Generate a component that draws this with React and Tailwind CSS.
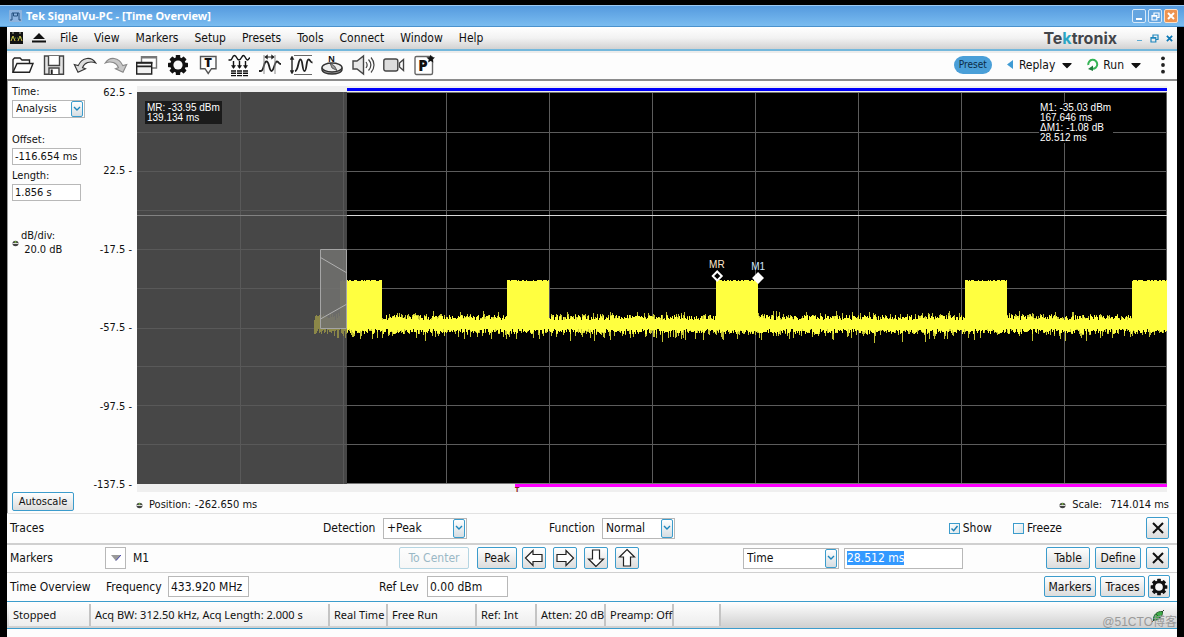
import { useEffect, useRef } from 'react';
import { FaCaretDown } from 'react-icons/fa';

const menus = ['File', 'View', 'Markers', 'Setup', 'Presets', 'Tools', 'Connect', 'Window', 'Help'];
const levels = ['62.5', '22.5', '-17.5', '-57.5', '-97.5', '-137.5'];

// Plot area, in units of the svg viewBox
const PLOT_W = 1030;
const PLOT_H = 392;
const LIVE_X = 210;
const gridX = [103, 206, 309, 412, 515, 618, 721, 824, 927, 1029];
const gridY = [40, 79, 118, 157, 196, 236, 274, 313, 352];
const bursts = [[203, 245], [370, 412], [579, 621], [828, 870], [995, 1030]];

function makeTrace() {
  let seed = 7;
  const rand = () => {
    seed = (seed * 16807) % 2147483647;
    return seed / 2147483647;
  };
  let dim = '';
  let body = '';
  let tips = '';
  for (let x = 177; x < PLOT_W; x++) {
    const inBurst = bursts.some(([a, b]) => x >= a && x < b);
    const top = inBurst ? 189 - Math.round(rand() * 1.2) : 228 - Math.round(rand() * 5);
    const bottom = 237 + Math.round(rand() * 5);
    const up = inBurst ? 0 : Math.round(Math.pow(rand(), 5) * 5);
    const down = Math.round(Math.pow(rand(), 6) * 9);
    const px = x + 0.5;
    if (x < LIVE_X) {
      dim += `M${px} ${top - up}V${bottom + down}`;
    } else {
      body += `M${px} ${top}V${bottom}`;
      tips += `M${px} ${top - up}V${bottom + down}`;
    }
  }
  return { dim, body, tips };
}

const trace = makeTrace();

function Gear({ className }) {
  return (
    <svg viewBox="0 0 24 24" className={className}>
      <g fill="#111">
        {[0, 45, 90, 135].map((a) => (
          <rect key={a} x="9.8" y="2" width="4.4" height="20" rx="0.6" transform={`rotate(${a} 12 12)`} />
        ))}
        <circle cx="12" cy="12" r="7.8" />
      </g>
      <circle cx="12" cy="12" r="4.6" fill="#fafafa" />
    </svg>
  );
}

const svgProps = { viewBox: '0 0 24 24', className: 'h-6 w-6', fill: 'none', stroke: '#222', strokeWidth: 1.4 };

const tools = [
  ['Open', (
    <svg {...svgProps}>
      <path d="M2 19V6.5L3.5 5H9l2 2h7.500v3.500" />
      <path d="M2 19.300L6 10.500h16L18.500 19.300z" fill="#fff" />
    </svg>
  )],
  ['Save', (
    <svg {...svgProps} stroke="#444">
      <path d="M2.500 3h19v18.300h-19z" fill="#e4e4e4" />
      <path d="M6.500 3v9.500h11V3" fill="#fff" />
      <path d="M7 21v-6h10v6" fill="#fff" />
      <path d="M9.700 16.500V21" stroke="#222" strokeWidth="2" />
    </svg>
  )],
  ['Undo', (
    <svg {...svgProps} stroke="#333" strokeWidth="1.1">
      <path d="M1.300 11.500L5 19.200l7.500-3.400-3-1.200C11.500 9.600 17 7.800 22.800 10 18.500 3.400 9.200 3.600 5.200 12.600z" fill="#ddd" />
    </svg>
  )],
  ['Redo', (
    <svg {...svgProps} stroke="#888" strokeWidth="1.1">
      <path d="M22.700 11.500L19 19.200l-7.500-3.400 3-1.200C12.500 9.600 7 7.800 1.200 10 5.500 3.400 14.800 3.600 18.800 12.600z" fill="#c8c8c8" />
    </svg>
  )],
  ['Displays', (
    <svg {...svgProps}>
      <path d="M6.500 3.700h15V15h-15z" fill="#fff" stroke="#777" />
      <path d="M6 4.500h16" stroke="#777" strokeWidth="2" />
      <path d="M1.700 9.500h15V21h-15z" fill="#f2f2f2" />
      <path d="M1.700 13.300h15M1 9.800h16.400" strokeWidth="1.8" />
    </svg>
  )],
  ['Settings', <Gear className="h-6 w-6" />],
  ['Trigger', (
    <svg {...svgProps} stroke="#555">
      <path d="M3.500 3.500H19v12.200h-4.500L11.200 20.500 8 15.700H3.500z" />
      <text x="11.200" y="14" textAnchor="middle" fontFamily="Noto Sans" fontWeight="900" fontSize="13" fill="#111" stroke="none">T</text>
    </svg>
  )],
  ['Acquire', (
    <svg {...svgProps} stroke="#111">
      <path d="M.5 7h2C4.500 7 4 2.500 6.500 2.500S8.500 7 11 7s2.500-4.500 4.500-4.500S17.500 7 19.500 7c1.500 0 1-2 2.500-2" />
      <path d="M5.500 8v7M11.500 8v7M17.500 8v7" />
      <path d="M3.500 12.500l2 3 2-3zM9.500 12.500l2 3 2-3zM15.500 12.500l2 3 2-3z" fill="#111" strokeWidth="0.5" />
      <path d="M3 18h5M9 18h5M15 18h5M3 20.300h5M9 20.300h5M15 20.300h5M3 22.600h5M9 22.600h5M15 22.600h5" />
    </svg>
  )],
  ['Analysis time', (
    <svg {...svgProps}>
      <path d="M0 18h2C5 18 4.500 8.500 7.500 8.500S10 18 12.500 18s3-9.500 5.500-9.500c2 0 1.500 2.500 4 2.500" strokeWidth="1.8" />
      <path d="M5 2v19M16 2v19" stroke="#888" strokeWidth="1" />
      <path d="M6 4h9" strokeWidth="1" />
      <path d="M8.500 1.800L5.700 4l2.800 2.200zM12.500 1.800L15.300 4l-2.800 2.200z" fill="#222" strokeWidth="0.4" />
    </svg>
  )],
  ['Amplitude', (
    <svg {...svgProps}>
      <path d="M4 2.500h18M4 21.500h18" strokeWidth="1" stroke="#666" />
      <path d="M5 18c3.500 0 3-11.500 5.500-11.500S12 18 14.500 18 16 6.500 18.500 6.500c2 0 1.500 3 4 3" strokeWidth="1.8" />
      <path d="M2 4v16" />
      <path d="M0 6.500L2 3l2 3.500zM0 17.500L2 21l2-3.500z" fill="#222" strokeWidth="0.4" />
    </svg>
  )],
  ['Direction', (
    <svg {...svgProps} stroke="#333">
      <path d="M1 14.500v2c0 6 20 6 20 0v-2" fill="#aaa" />
      <ellipse cx="11" cy="14.500" rx="10" ry="4.500" fill="#eee" />
      <path d="M9 10l2 5 5 2.500-2.500-4.500z" fill="#999" strokeWidth="0.7" />
      <text x="10.500" y="8.500" textAnchor="middle" fontFamily="Liberation Sans" fontWeight="700" fontSize="9" fill="#111" stroke="none">N</text>
    </svg>
  )],
  ['Audio', (
    <svg {...svgProps} stroke="#444">
      <path d="M1 8h4l6.500-5v18L5 16H1z" fill="#e8e8e8" />
      <path d="M14 9c1.500 2 1.500 4 0 6M16.500 6.500c3 3.500 3 7.500 0 11M19 4.500c4 4.500 4 10.500 0 15" strokeWidth="1.2" />
    </svg>
  )],
  ['Record', (
    <svg {...svgProps} stroke="#444">
      <rect x="0.8" y="6" width="14" height="12" rx="2" fill="#ddd" />
      <path d="M16.500 10l4-3.500v11l-4-3.500z" fill="#fff" />
    </svg>
  )],
  ['Preset list', (
    <svg {...svgProps} stroke="#666">
      <rect x="1" y="3.500" width="17.500" height="18" rx="1.500" fill="#fff" />
      <text x="9" y="18" textAnchor="middle" fontFamily="Noto Sans" fontWeight="900" fontSize="15" fill="#111" stroke="none">P</text>
      <path d="M16.700 3.200l.8 1.600 1.800.2-1.400 1.200.4 1.800-1.600-.9-1.600.9.400-1.800L14.100 5l1.800-.2z" fill="#111" stroke="#111" strokeWidth="1.400" />
    </svg>
  )],
];

function Select({ label, value, className }) {
  return (
    <span className={`relative block ${className}`}>
      <select aria-label={label} defaultValue={value} className="block h-full w-full appearance-none border border-[#b8b8b8] bg-white pl-[3px] outline-none">
        <option>{value}</option>
      </select>
      <span className="pointer-events-none absolute inset-y-px right-0.5 flex w-3 items-center justify-center rounded-xs border border-[#3c9ccc] bg-linear-to-b from-white to-[#d5dde2]">
        <svg viewBox="0 0 8 6" className="h-1.5 w-2" fill="none" stroke="#1d86bd" strokeWidth="1.4">
          <path d="M1 1l3 3 3-3" />
        </svg>
      </span>
    </span>
  );
}

function Button({ children, className = '', ...rest }) {
  return (
    <button
      type="button"
      className={`flex items-center justify-center rounded-xs border border-[#3c9ccc] bg-linear-to-b from-white to-[#dcdcdc] whitespace-nowrap disabled:border-[#b5d5e2] disabled:from-[#fdfdfd] disabled:to-[#f6f6f6] disabled:text-[#9ab8c6] ${className}`}
      {...rest}
    >
      {children}
    </button>
  );
}

function ArrowButton({ label, rotate }) {
  return (
    <Button aria-label={label} className="h-[22px] w-6">
      <svg viewBox="0 0 20 20" className={`h-5 w-5 ${rotate}`} fill="#fff" stroke="#222" strokeWidth="1.2">
        <path d="M1.500 10L9 2.500v4h9v7H9v4z" />
      </svg>
    </Button>
  );
}

function CloseButton({ label }) {
  return (
    <Button aria-label={label} className="h-[22px] w-[23px]">
      <svg viewBox="0 0 12 12" className="h-3 w-3" stroke="#111" strokeWidth="2">
        <path d="M1 1l10 10M11 1L1 11" />
      </svg>
    </Button>
  );
}

function CheckBox({ label, checked }) {
  return (
    <label className="flex items-center gap-[3px]">
      <span className="relative flex h-[11px] w-[11px]">
        <input type="checkbox" defaultChecked={checked} className="peer h-[11px] w-[11px] appearance-none border border-[#3c9ccc] bg-linear-to-br from-white to-[#dde6ea]" />
        <svg viewBox="0 0 11 11" className="pointer-events-none absolute inset-0 hidden peer-checked:block" fill="none" stroke="#1d7fb5" strokeWidth="1.4">
          <path d="M2.500 5.500l2.200 2.300L8.500 3" />
        </svg>
      </span>
      {label}
    </label>
  );
}

function Knob() {
  return (
    <svg viewBox="0 0 7 7" className="h-[7px] w-[7px] shrink-0">
      <ellipse cx="3.500" cy="3.500" rx="3" ry="2.800" fill="#444" />
      <path d="M.5 3.500h6" stroke="#ddd" />
      <circle cx="3.500" cy="2" r="1" fill="#7ab648" />
    </svg>
  );
}

function Restore({ color }) {
  return (
    <svg viewBox="0 0 9 9" className="h-[9px] w-[9px]" fill="none" stroke={color} strokeWidth="1.2">
      <path d="M3 3V1h5v4.500H6" />
      <path d="M1 3.500h4.800V8H1zM1 4.200h5" />
    </svg>
  );
}

function TitleBar() {
  return (
    <header className="flex h-[22px] items-center border-t border-b border-t-[#9ccaf2] border-b-[#4b92cd] bg-linear-to-b from-[#559ade] to-[#7abcf0] pr-1.5 pl-[9px]">
      <svg viewBox="0 0 13 12" className="h-3 w-[13px]" stroke="#24507f">
        <path d="M.5.5h12v11H.5z" fill="#8db4e0" stroke="#8fb4dc" />
        <path d="M1 10h2V3h7v7h2M4.500 3v3h4V3" fill="none" />
      </svg>
      <h1 className="ml-1 font-['Noto_Sans',sans-serif] text-[11px] font-bold text-white">Tek SignalVu-PC - [Time Overview]</h1>
      <div className="ml-auto flex gap-0.5">
        <button type="button" aria-label="Minimize" className="flex h-3.5 w-3.5 items-end justify-center rounded-xs border border-[#d5e8f8] bg-[#65a5e0] pb-0.5">
          <span className="h-0.5 w-1.5 bg-white" />
        </button>
        <button type="button" aria-label="Restore" className="flex h-3.5 w-3.5 items-center justify-center rounded-xs border border-[#d5e8f8] bg-[#65a5e0]">
          <Restore color="#fff" />
        </button>
        <button type="button" aria-label="Close" className="flex h-3.5 w-3.5 items-center justify-center rounded-xs border border-[#fbe0c8] bg-[#ee9350]">
          <svg viewBox="0 0 8 8" className="h-2 w-2" stroke="#fff" strokeWidth="2"><path d="M1 1l6 6M7 1L1 7" /></svg>
        </button>
      </div>
    </header>
  );
}

function MenuBar() {
  return (
    <nav className="flex h-6 items-center border-b-2 border-[#74b8dc] bg-linear-to-b from-white via-[#f2f2f2] to-[#d2d2d2] pr-1 pl-[3px]">
      <svg viewBox="0 0 13 12" className="h-3 w-[13px]">
        <path d="M0 0h13v12H0z" fill="#111" />
        <path d="M1 9l2-5 2 5M8 9l2-5 2 5" fill="none" stroke="#d8c84a" />
        <path d="M1 6h11" stroke="#5c8a3a" strokeDasharray="1 1" />
        <path d="M2 1h2M9 1h2" stroke="#b8b8a0" />
      </svg>
      <svg viewBox="0 0 14 10" className="ml-[9px] h-2.5 w-3.5"><path d="M7 0l6 6H1zM0 7.500h14v2H0z" fill="#111" /></svg>
      <div className="ml-3.5 flex gap-4">
        {menus.map((m) => (
          <a key={m} href="#" className="text-xs">{m}</a>
        ))}
      </div>
      <div className="ml-auto flex items-center">
        <span className="mr-5 font-['Inter',sans-serif] text-base font-bold text-[#42454a]">
          Te<span className="text-[#2aa5c4]">k</span>tronix
        </span>
        <button type="button" aria-label="Minimize window" className="mt-1 h-px w-[5px] bg-[#5eabd2]" />
        <button type="button" aria-label="Restore window" className="ml-2"><Restore color="#1d86bd" /></button>
        <button type="button" aria-label="Close window" className="ml-[7px]">
          <svg viewBox="0 0 8 8" className="h-[7px] w-[7px]" stroke="#0c78b5" strokeWidth="2"><path d="M1 1l6 6M7 1L1 7" /></svg>
        </button>
      </div>
    </nav>
  );
}

function ToolBar() {
  return (
    <div className="flex h-[30px] items-center border-t-2 border-b-2 border-t-[#ececec] border-b-[#8c8c8c] bg-[#fdfdfd] pr-3 pb-[3px] pl-1">
      <div className="flex gap-[7px]">
        {tools.map(([name, icon]) => (
          <button key={name} type="button" aria-label={name}>{icon}</button>
        ))}
      </div>
      <div className="ml-auto flex items-center text-xs">
        <button type="button" className="h-[18px] w-[38px] rounded-full bg-[#4a9fd8] text-[10px] text-[#0c2c45]">Preset</button>
        <button type="button" className="ml-[15px] flex items-center">
          <svg viewBox="0 0 6 9" className="h-[9px] w-1.5"><path d="M6 0v9L0 4.500z" fill="#3f9bd4" /></svg>
          <span className="ml-1.5">Replay</span>
        </button>
        <button type="button" aria-label="Replay options" className="ml-1"><FaCaretDown className="h-4 w-4" /></button>
        <button type="button" className="ml-[11px] flex items-center">
          <svg viewBox="0 0 13 13" className="h-[13px] w-[13px]" fill="none" stroke="#35b455" strokeWidth="2">
            <path d="M2.300 7A4.500 4.500 0 1 1 6.500 10.800" />
            <path d="M7 7.500v5.500L2 11z" fill="#1e7d3c" stroke="none" />
          </svg>
          <span className="ml-1">Run</span>
        </button>
        <button type="button" aria-label="Run options" className="ml-1"><FaCaretDown className="h-4 w-4" /></button>
        <button type="button" aria-label="More" className="ml-[17px]">
          <svg viewBox="0 0 4 18" className="h-[18px] w-1" fill="#222">
            <circle cx="2" cy="2.300" r="1.900" /><circle cx="2" cy="9" r="1.900" /><circle cx="2" cy="15.700" r="1.900" />
          </svg>
        </button>
      </div>
    </div>
  );
}

function SidePanel() {
  return (
    <aside className="flex w-20 shrink-0 flex-col border-l border-[#999] pl-1 text-[11px] leading-[14px]">
      <span className="mt-1">Time:</span>
      <Select label="Time" value="Analysis" className="mt-px h-[18px] w-[73px]" />
      <label htmlFor="offset" className="mt-[15px]">Offset:</label>
      <input id="offset" defaultValue="-116.654 ms" className="mt-px h-[17px] w-[69px] border border-[#b8b8b8] bg-white pl-0.5" />
      <label htmlFor="length" className="mt-1">Length:</label>
      <input id="length" defaultValue="1.856 s" className="mt-px h-[17px] w-[69px] border border-[#b8b8b8] bg-white pl-0.5" />
      <div className="mt-7 flex items-center gap-0.5">
        <Knob />
        <span>dB/div:<br />&nbsp;20.0 dB</span>
      </div>
      <Button className="mt-auto mb-0.5 h-[19px] w-[62px]">Autoscale</Button>
    </aside>
  );
}

function Plot() {
  return (
    <div className="relative min-h-[392px] flex-1 bg-black font-['Liberation_Sans',Arial,sans-serif] text-[10px] leading-[10px] text-white">
      <svg viewBox={`0 0 ${PLOT_W} ${PLOT_H}`} preserveAspectRatio="none" className="absolute inset-0 h-full w-full" fill="none">
        <g stroke="#5c5c5c">
          {gridX.map((x) => <path key={x} d={`M${x + 0.5} 0V${PLOT_H}`} />)}
          {gridY.map((y) => <path key={y} d={`M0 ${y + 0.5}H${PLOT_W}`} />)}
        </g>
        <path d="M0 .5H1030M0 391.500H1030" stroke="#777" />
        <path d="M0 123.500H1030" stroke="#d8d8d8" />
        <path d={trace.tips} stroke="#c4c434" />
        <path d={trace.body} stroke="#ffff40" />
        <path d="M0 0h210v392H0z" fill="#474747" />
        <g stroke="#595959">
          {gridX.slice(0, 2).map((x) => <path key={x} d={`M${x + 0.5} 0V${PLOT_H}`} />)}
          {gridY.map((y) => <path key={y} d={`M0 ${y + 0.5}H${LIVE_X}`} />)}
        </g>
        <path d="M0 123.500H210" stroke="#828282" />
        <path d={trace.dim} stroke="#8b8748" />
        <path d="M183.500 157.500h26v79h-26z" fill="#727270" fillOpacity="0.85" stroke="#a5a5a5" />
        <path d="M183.500 165.500L210 181M183.500 227L210 212" stroke="#b0b0b0" />
      </svg>
      <div className="absolute top-[9px] left-2 bg-[#1b1b1b] px-0.5 pt-0.5 pb-px whitespace-nowrap">MR: -33.95 dBm<br />139.134 ms</div>
      <div className="absolute top-2.5 right-[54px] w-[74px] bg-black px-px pt-px whitespace-nowrap">M1: -35.03 dBm<br />167.646 ms<br />ΔM1: -1.08 dB<br />28.512 ms</div>
      <div className="absolute top-[42.8%] left-[56.3%] flex -translate-x-1/2 flex-col items-center text-[#ffe6cc]">
        MR
        <svg viewBox="0 0 12 12" className="h-3 w-3" fill="#000" stroke="#fff" strokeWidth="2"><path d="M6 1.500L10.500 6 6 10.500 1.500 6z" /></svg>
      </div>
      <div className="absolute top-[43.3%] left-[60.3%] flex -translate-x-1/2 flex-col items-center text-[#cfe8ff]">
        M1
        <svg viewBox="0 0 12 12" className="h-3 w-3" fill="#fff"><path d="M6 0l6 6-6 6-6-6z" /></svg>
      </div>
    </div>
  );
}

function Display() {
  return (
    <main className="flex flex-1 pr-2.5">
      <SidePanel />
      <div className="flex flex-1 flex-col text-[11px] leading-[14px]">
        <div className="mt-[5px] flex flex-1">
          <div className="flex w-[50px] shrink-0 flex-col justify-between pr-[5px] text-right">
            {levels.map((l) => <span key={l}>{l} -</span>)}
          </div>
          <div className="flex flex-1 flex-col bg-[#efefef]">
            <div className="flex h-1.5 items-end">
              <div className="mb-px ml-[20.4%] h-[3px] flex-1 bg-[#0000fa]" />
            </div>
            <Plot />
            <div className="h-2">
              <div className="relative ml-[36.7%] h-[3px] bg-[#ff00ff]">
                <span className="absolute top-[3px] left-0 text-[7px] leading-[6px] font-bold text-[#8c1a1a]">T</span>
              </div>
            </div>
          </div>
        </div>
        <div className="mt-[5px] -mr-0.5 flex h-4 items-center pl-[49px]">
          <Knob />
          <span className="ml-1.5">Position:</span>
          <span className="ml-1">-262.650 ms</span>
          <span className="ml-auto"><Knob /></span>
          <span className="ml-1.5">Scale:</span>
          <span className="ml-2">714.014 ms</span>
        </div>
      </div>
    </main>
  );
}

function Controls() {
  const markerValue = useRef(null);

  useEffect(() => {
    markerValue.current.focus();
    markerValue.current.select();
  }, []);

  return (
    <section className="text-xs">
      <div className="flex h-[30px] items-center border-t border-[#e2e2e2] pr-2 pb-px pl-[3px]">
        <span className="w-[313px]">Traces</span>
        <span className="w-[60px]">Detection</span>
        <Select label="Detection" value="+Peak" className="h-[21px] w-[84px]" />
        <span className="ml-[82px] w-[53px]">Function</span>
        <Select label="Function" value="Normal" className="h-[21px] w-[73px]" />
        <div className="ml-auto flex items-center gap-[21px]">
          <CheckBox label="Show" checked />
          <CheckBox label="Freeze" />
        </div>
        <div className="ml-[84px]"><CloseButton label="Close traces" /></div>
      </div>
      <div className="flex h-[29px] items-center border-t-2 border-[#d0d0d0] pr-2 pb-px pl-[3px]">
        <span className="w-[95px]">Markers</span>
        <button type="button" aria-label="Select marker" className="flex h-[22px] w-[21px] items-center justify-center border border-[#b8b8b8] bg-white">
          <svg viewBox="0 0 10 6" className="h-1.5 w-2.5"><path d="M0 0h10L5 6z" fill="#999" /><path d="M10 0L5 5.500" stroke="#4b4bb0" /></svg>
        </button>
        <span className="ml-[7px] w-[266px]">M1</span>
        <Button disabled className="h-[22px] w-[70px]">To Center</Button>
        <Button className="ml-2 h-[22px] w-10">Peak</Button>
        <div className="ml-[5px] flex gap-[7px]">
          <ArrowButton label="Previous left" rotate="rotate-0" />
          <ArrowButton label="Next right" rotate="rotate-180" />
          <ArrowButton label="Next down" rotate="-rotate-90" />
          <ArrowButton label="Next up" rotate="rotate-90" />
        </div>
        <div className="ml-auto"><Select label="Marker domain" value="Time" className="h-[21px] w-24" /></div>
        <input ref={markerValue} aria-label="Marker time" defaultValue="28.512 ms" className="ml-[5px] h-[21px] w-[119px] border border-[#b8b8b8] bg-white px-0.5 outline-none selection:bg-[#3399ff] selection:text-white" />
        <Button className="ml-[83px] h-[22px] w-11">Table</Button>
        <Button className="ml-[5px] h-[22px] w-[46px]">Define</Button>
        <div className="ml-[5px]"><CloseButton label="Close markers" /></div>
      </div>
      <div className="flex h-[29px] items-center border-t border-[#d0d0d0] pr-[7px] pb-px pl-[3px]">
        <span className="w-24">Time Overview</span>
        <label htmlFor="freq" className="w-[62px]">Frequency</label>
        <input id="freq" defaultValue="433.920 MHz" className="h-[21px] w-[81px] border border-[#b8b8b8] bg-white pl-0.5" />
        <label htmlFor="ref" className="ml-[130px] w-12">Ref Lev</label>
        <input id="ref" defaultValue="0.00 dBm" className="h-[21px] w-[81px] border border-[#b8b8b8] bg-white pl-0.5" />
        <Button className="ml-auto h-[21px] w-[52px]">Markers</Button>
        <Button className="ml-1 h-[21px] w-[45px]">Traces</Button>
        <Button aria-label="Display settings" className="ml-[3px] h-[23px] w-[22px]"><Gear className="h-5 w-5 shrink-0" /></Button>
      </div>
    </section>
  );
}

const statusCells = [
  ['Stopped', 'w-[82px]'],
  ['Acq BW: 312.50 kHz, Acq Length: 2.000 s', 'w-[239px]'],
  ['Real Time', 'w-[58px]'],
  ['Free Run', 'w-[89px]'],
  ['Ref: Int', 'w-[60px]'],
  ['Atten: 20 dB', 'w-[69px]'],
  ['Preamp: Off', 'w-[68px]'],
  ['', 'w-[47px]'],
];

function StatusBar() {
  return (
    <footer className="relative flex h-7 border-y border-[#3c9ccc] bg-linear-to-b from-white to-[#cfcfcf] py-0.5 pl-0.5 font-['Noto_Sans',sans-serif] text-[11px]">
      {statusCells.map(([text, width]) => (
        <div key={text} className={`flex items-center border-r-2 border-[#c4c4c4] bg-linear-to-b from-[#fdfdfd] to-[#ededed] pl-1 whitespace-nowrap ${width}`}>
          {text}
        </div>
      ))}
      <svg viewBox="0 0 12 12" className="mt-1.5 mr-[13px] ml-auto h-3 w-3">
        <path d="M0 12l3-3M9 3l3-3" stroke="#333" />
        <path d="M1.500 10C1 5 5 1 10.500 1.500 11 6 7 11 1.500 10z" fill="#3fae49" stroke="#27632e" />
        <path d="M4 4l4 4" stroke="#27632e" />
      </svg>
      <span className="absolute right-0 -bottom-0.5 font-['Liberation_Sans','Noto_Sans_CJK_SC',sans-serif] text-xs leading-4 text-[#9a9a9a]">@51CTO博客</span>
    </footer>
  );
}

export default function App() {
  return (
    <div className="flex min-h-screen flex-col bg-black pt-[5px] font-['DejaVu_Sans_Condensed','DejaVu_Sans',sans-serif] text-[#111]">
      <TitleBar />
      <div className="mx-[7px] flex flex-1 flex-col bg-[#fdfdfd] pb-2">
        <MenuBar />
        <ToolBar />
        <Display />
        <Controls />
        <StatusBar />
      </div>
    </div>
  );
}
